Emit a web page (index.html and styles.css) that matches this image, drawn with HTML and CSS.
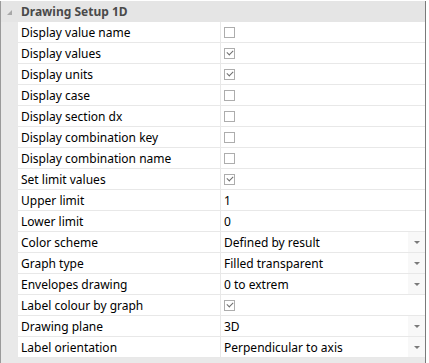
FILE: index.html
```html
<!DOCTYPE html>
<html lang="en">
<head>
    <meta charset="UTF-8">
    <title>Drawing Setup 1D</title>
    <link rel="stylesheet" href="styles.css">
</head>
<body>
    <div class="property-grid">
        <div class="category">
            <span class="expander"></span>
            <span class="category-name">Drawing Setup 1D</span>
        </div>

        <div class="row">
            <div class="label">Display value name</div>
            <div class="value"><span class="checkbox"></span></div>
        </div>
        <div class="row">
            <div class="label">Display values</div>
            <div class="value"><span class="checkbox checked"></span></div>
        </div>
        <div class="row">
            <div class="label">Display units</div>
            <div class="value"><span class="checkbox checked"></span></div>
        </div>
        <div class="row">
            <div class="label">Display case</div>
            <div class="value"><span class="checkbox"></span></div>
        </div>
        <div class="row">
            <div class="label">Display section dx</div>
            <div class="value"><span class="checkbox"></span></div>
        </div>
        <div class="row">
            <div class="label">Display combination key</div>
            <div class="value"><span class="checkbox"></span></div>
        </div>
        <div class="row">
            <div class="label">Display combination name</div>
            <div class="value"><span class="checkbox"></span></div>
        </div>
        <div class="row">
            <div class="label">Set limit values</div>
            <div class="value"><span class="checkbox checked"></span></div>
        </div>
        <div class="row">
            <div class="label">Upper limit</div>
            <div class="value">1</div>
        </div>
        <div class="row">
            <div class="label">Lower limit</div>
            <div class="value">0</div>
        </div>
        <div class="row">
            <div class="label">Color scheme</div>
            <div class="value combo">Defined by result<span class="drop"></span></div>
        </div>
        <div class="row">
            <div class="label">Graph type</div>
            <div class="value combo">Filled transparent<span class="drop"></span></div>
        </div>
        <div class="row">
            <div class="label">Envelopes drawing</div>
            <div class="value combo">0 to extrem<span class="drop"></span></div>
        </div>
        <div class="row">
            <div class="label">Label colour by graph</div>
            <div class="value"><span class="checkbox checked"></span></div>
        </div>
        <div class="row">
            <div class="label">Drawing plane</div>
            <div class="value combo">3D<span class="drop"></span></div>
        </div>
        <div class="row">
            <div class="label">Label orientation</div>
            <div class="value combo">Perpendicular to axis<span class="drop"></span></div>
        </div>
    </div>
</body>
</html>
```

FILE: styles.css
```css
* {
    margin: 0;
    padding: 0;
    box-sizing: border-box;
}

body {
    font-family: 'Noto Sans', sans-serif;
    font-size: 12px;
    color: #000000;
    background-color: #ffffff;
    padding-top: 1px;
}

.property-grid {
    width: 426px;
    height: 362px;
    background-color: #e9e9e9;
    border-left: 1px solid #9a9a9a;
    border-right: 1px solid #7a7a7a;
}

.category {
    height: 21px;
    display: flex;
    align-items: center;
    background-color: #e5e5e5;
}

.expander {
    width: 20px;
    height: 21px;
    position: relative;
}

/* small filled triangle of an expanded node */
.expander::after {
    content: "";
    position: absolute;
    left: 6px;
    top: 9px;
    border-left: 5px solid transparent;
    border-bottom: 5px solid #a8a8a8;
}

.category-name {
    font-weight: bold;
    color: #4a4a4a;
}

.row {
    display: flex;
    height: 21px;
    margin-left: 17px;
}

.label,
.value {
    background-color: #ffffff;
    border-bottom: 1px solid #e8e8e8;
    display: flex;
    align-items: center;
    padding-left: 3px;
    white-space: nowrap;
}

.label {
    width: 203px;
    border-right: 1px solid #e8e8e8;
}

.value {
    flex: 1;
    position: relative;
}

.checkbox {
    width: 11px;
    height: 11px;
    border: 1px solid #adadad;
    position: relative;
}

.checkbox.checked::after {
    content: "";
    position: absolute;
    left: 2px;
    top: 1px;
    width: 5px;
    height: 3px;
    border-left: 1px solid #6e6e6e;
    border-bottom: 1px solid #6e6e6e;
    transform: rotate(-45deg);
}

.drop {
    position: absolute;
    right: 0;
    top: 0;
    width: 17px;
    height: 20px;
    background-color: #f8f8f8;
}

.drop::after {
    content: "";
    position: absolute;
    left: 6px;
    top: 9px;
    border-left: 3px solid transparent;
    border-right: 3px solid transparent;
    border-top: 3px solid #7a7a7a;
}
```
